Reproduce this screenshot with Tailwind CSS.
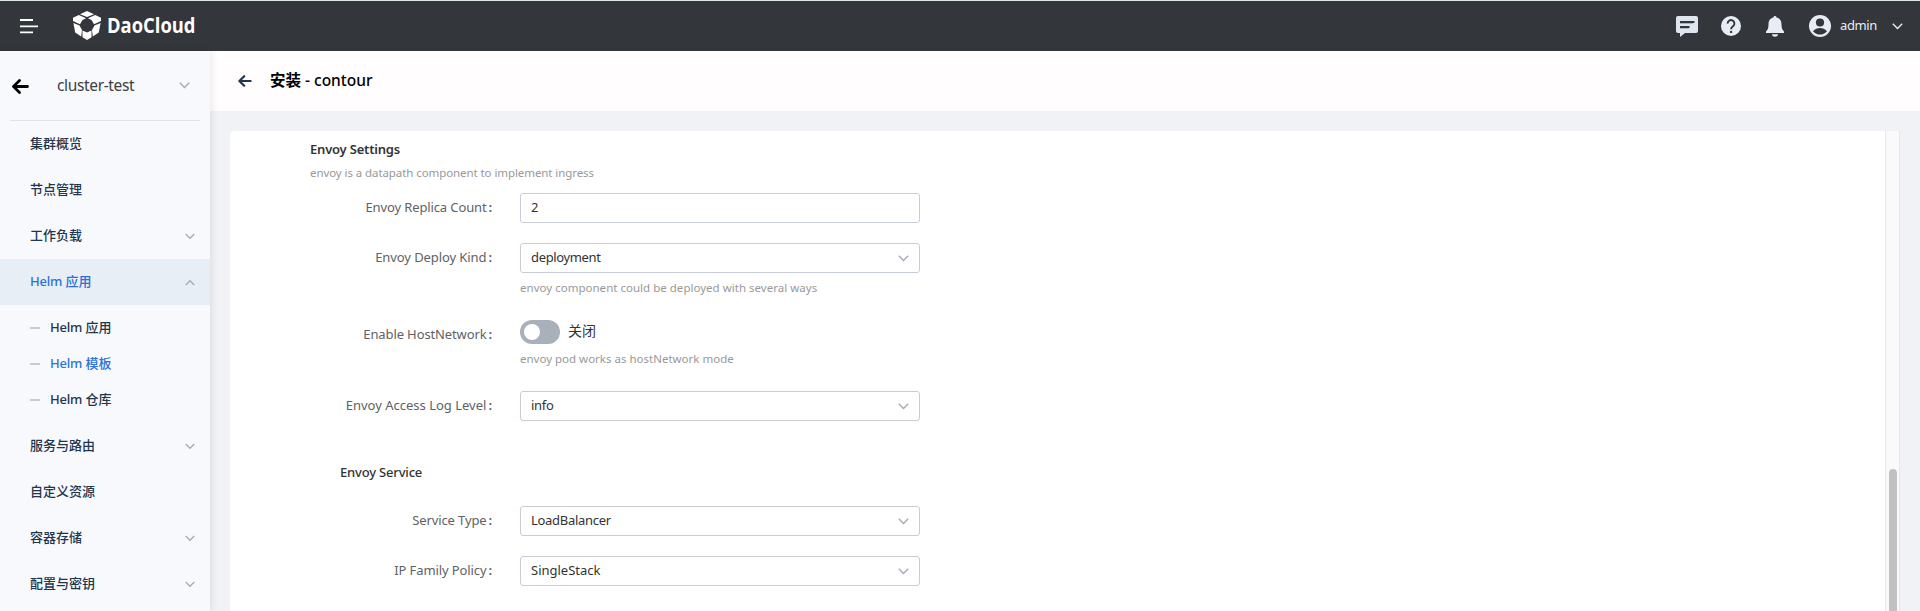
<!DOCTYPE html>
<html lang="zh-CN">
<head>
<meta charset="utf-8">
<title>安装 - contour</title>
<script src="https://cdn.jsdelivr.net/npm/@tailwindcss/browser@4"></script>
</head>
<body class="flex h-[611px] w-[1920px] flex-col overflow-hidden bg-[#f0f2f6] font-['Noto_Sans','Noto_Sans_CJK_SC',sans-serif] text-[13px] text-[#333]">
<svg class="hidden">
  <symbol id="down" viewBox="0 0 11 7"><path d="M.8.8 5.500 5.500 10.200.8" fill="none" stroke="currentColor" stroke-width="1.400"/></symbol>
  <symbol id="back" viewBox="0 0 17 15"><path d="M15.500 7.500H2M7.500 1.500l-6 6 6 6" fill="none" stroke="currentColor" stroke-width="2.800" stroke-linecap="round" stroke-linejoin="round"/></symbol>
</svg>
<header class="flex h-[51px] shrink-0 items-center border-t border-[#dfe9e3] bg-[#33363b] text-[#e8ecf4]">
  <svg class="ml-5 h-4 w-[18px]" viewBox="0 0 18 16"><path d="M0 2h13M0 8.300h18M0 14.300h13" stroke="#fff" stroke-width="1.800"/></svg>
  <svg class="mb-[1px] ml-[35px] h-[29px] w-[28px]" viewBox="0 0 28 29" fill="#fff">
    <path d="M14 0 21 3.200 14 6 7 3.200ZM5.800 4 13 7.200 9.500 9 7 13.200 0 10 0 6.700ZM22.200 4 28 6.700V10L21 13.200 18.500 9 15 7.200ZM.4 12 6.500 14.500 9 19 8.200 25.500 2.200 21.500ZM27.600 12 21.500 14.500 19 19 19.800 25.500 25.800 21.500ZM9.500 19.500 14 21.500 18.500 19.500V26.300L14 29 9.500 26.300Z"/>
  </svg>
  <span class="mb-[5px] ml-[6px] w-[88px] origin-left scale-x-[.835] font-['Open_Sans','Noto_Sans',sans-serif] text-[22px] leading-none font-bold whitespace-nowrap text-white">DaoCloud</span>
  <div class="ml-auto flex items-center">
    <svg class="h-[21px] w-[22px]" viewBox="0 0 22 21"><path d="M2 0h18a2 2 0 0 1 2 2v13a2 2 0 0 1-2 2H9l-5 4v-4H2a2 2 0 0 1-2-2V2a2 2 0 0 1 2-2Z" fill="#dfe6f0"/><path d="M4 7.500h13M4 12.300h9" stroke="#a9afb8" stroke-width="1"/><path d="M4 6h14.500M4 11h9.500" stroke="#33363b" stroke-width="2"/></svg>
    <svg class="ml-[23px] size-5" viewBox="0 0 20 20"><circle cx="10" cy="10" r="10" fill="#e8ecf4"/><path d="M6.600 7.600a3.400 3.400 0 1 1 5.600 2.500C11 11 10.100 11.500 10.100 13.200" fill="none" stroke="#33363b" stroke-width="1.900"/><circle cx="10.100" cy="15.900" r="1.200" fill="#33363b"/></svg>
    <svg class="ml-[24px] h-[21px] w-5" viewBox="0 0 20 21" fill="#e8ecf4"><path d="M10 0a1.500 1.500 0 0 1 1.500 1.600C15 2.300 16.500 5 16.500 8.500c0 4 1 5.500 2.500 7V17H1v-1.500c1.500-1.500 2.500-3 2.500-7C3.500 5 5 2.300 8.500 1.600A1.500 1.500 0 0 1 10 0ZM7 18.300h6a3 2.400 0 0 1-6 0Z"/></svg>
    <svg class="ml-[24px] size-[22px]" viewBox="0 0 22 22"><circle cx="11" cy="11" r="11" fill="#e8ecf4"/><circle cx="11" cy="7.500" r="4.100" fill="#33363b"/><path d="M4 16.200c2-2.400 4.400-3.300 7-3.300s5 .9 7 3.300c-4 4.500-10 4.500-14 0Z" fill="#33363b"/></svg>
    <span class="ml-[9px] w-[36px] text-[13px] tracking-[-0.4px]">admin</span>
    <svg class="mr-[17px] ml-[16px] h-[7px] w-[11px]"><use href="#down"/></svg>
  </div>
</header>
<div class="flex min-h-0 flex-1">
  <aside class="z-10 flex w-[210px] shrink-0 flex-col bg-[#f7f9fd] font-medium text-[#1f364d] shadow-[1px_0_8px_rgba(0,0,0,0.10)]">
    <div class="mx-[10px] flex h-[70px] shrink-0 items-center border-b border-[#dfe2ea] text-[#3c4046]">
      <svg class="mt-[2px] ml-[2px] h-[15px] w-[17px] text-black"><use href="#back"/></svg>
      <span class="ml-[28px] text-[15.500px] font-normal tracking-[-0.350px]">cluster-test</span>
      <svg class="mr-[10px] ml-auto h-[7px] w-[11px] text-[#a3abb8]"><use href="#down"/></svg>
    </div>
    <div class="flex h-[46px] shrink-0 items-center px-[30px]">集群概览</div>
    <div class="flex h-[46px] shrink-0 items-center px-[30px]">节点管理</div>
    <div class="flex h-[46px] shrink-0 items-center justify-between pr-[15px] pl-[30px]">工作负载<svg class="h-[7px] w-[10px] text-[#a3abb8]"><use href="#down"/></svg></div>
    <div class="flex h-[46px] shrink-0 items-center justify-between bg-[#e8eef5] pr-[15px] pl-[30px] text-[#2a72d8]"><span><span class="tracking-[-0.2px]">Helm</span> 应用</span><svg class="h-[7px] w-[10px] rotate-180 text-[#a3abb8]"><use href="#down"/></svg></div>
    <div class="flex shrink-0 flex-col py-[5px] pl-[30px]">
      <div class="flex h-9 items-center gap-[10px]"><i class="h-[2px] w-[10px] bg-[#c5ccd6]"></i><span><span class="tracking-[-0.2px]">Helm</span> 应用</span></div>
      <div class="flex h-9 items-center gap-[10px] text-[#2a72d8]"><i class="h-[2px] w-[10px] bg-[#c5ccd6]"></i><span><span class="tracking-[-0.2px]">Helm</span> 模板</span></div>
      <div class="flex h-9 items-center gap-[10px]"><i class="h-[2px] w-[10px] bg-[#c5ccd6]"></i><span><span class="tracking-[-0.2px]">Helm</span> 仓库</span></div>
    </div>
    <div class="flex h-[46px] shrink-0 items-center justify-between pr-[15px] pl-[30px]">服务与路由<svg class="h-[7px] w-[10px] text-[#a3abb8]"><use href="#down"/></svg></div>
    <div class="flex h-[46px] shrink-0 items-center px-[30px]">自定义资源</div>
    <div class="flex h-[46px] shrink-0 items-center justify-between pr-[15px] pl-[30px]">容器存储<svg class="h-[7px] w-[10px] text-[#a3abb8]"><use href="#down"/></svg></div>
    <div class="flex h-[46px] shrink-0 items-center justify-between pr-[15px] pl-[30px]">配置与密钥<svg class="h-[7px] w-[10px] text-[#a3abb8]"><use href="#down"/></svg></div>
  </aside>
  <main class="flex min-w-0 flex-1 flex-col">
    <div class="flex h-[60px] shrink-0 items-center bg-[#fffdfe] pl-7 text-[15.500px] font-semibold text-black">
      <svg class="h-[12px] w-[14px] text-[#1f364d]"><use href="#back"/></svg>
      <span class="ml-[18px]">安装 <span class="font-medium">- contour</span></span>
    </div>
    <div class="mt-5 mr-5 ml-5 flex min-h-0 flex-1">
      <form class="flex min-w-0 flex-1 flex-col overflow-hidden rounded-tl bg-white">
        <h2 class="mt-2 ml-20 h-5 text-[13px] leading-5 font-semibold tracking-[-0.200px]">Envoy Settings</h2>
        <p class="mt-[5px] ml-20 h-[18px] text-[11.500px] leading-[18px] tracking-[-0.080px] text-[#999]">envoy is a datapath component to implement ingress</p>
        <div class="mt-[11px] flex h-[30px] items-center">
          <label class="w-[262px] text-right tracking-[-0.120px] text-[#606266]">Envoy Replica Count<span class="pl-[2px] font-semibold">:</span></label>
          <div class="ml-7 flex h-[30px] w-[400px] items-center rounded-[3px] border border-[#c8ccd9] px-[10px]">2</div>
        </div>
        <div class="mt-5 flex h-[30px] items-center">
          <label class="w-[262px] text-right tracking-[-0.080px] text-[#606266]">Envoy Deploy Kind<span class="pl-[2px] font-semibold">:</span></label>
          <div class="ml-7 flex h-[30px] w-[400px] items-center justify-between rounded-[3px] border border-[#c8ccd9] px-[10px] tracking-[-0.350px]">deployment<svg class="h-[7px] w-[11px] text-[#a3abb8]"><use href="#down"/></svg></div>
        </div>
        <p class="mt-[6px] ml-[290px] h-[18px] text-[11.500px] leading-[18px] tracking-[0.020px] text-[#999]">envoy component could be deployed with several ways</p>
        <div class="mt-[23px] flex h-6 items-center">
          <label class="w-[262px] pt-[5px] text-right tracking-[-0.120px] text-[#606266]">Enable HostNetwork<span class="pl-[2px] font-semibold">:</span></label>
          <div class="ml-7 flex h-6 w-10 items-center rounded-full bg-[#a8b0b9] pl-1"><i class="size-4 rounded-full bg-white"></i></div>
          <span class="mb-[3px] ml-2 text-[14px]">关闭</span>
        </div>
        <p class="mt-[6px] ml-[290px] h-[18px] text-[11.500px] leading-[18px] text-[#999]">envoy pod works as hostNetwork mode</p>
        <div class="mt-[23px] flex h-[30px] items-center">
          <label class="w-[262px] text-right text-[#606266]">Envoy Access Log Level<span class="pl-[2px] font-semibold">:</span></label>
          <div class="ml-7 flex h-[30px] w-[400px] items-center justify-between rounded-[3px] border border-[#c8ccd9] px-[10px] tracking-[-0.300px]">info<svg class="h-[7px] w-[11px] text-[#a3abb8]"><use href="#down"/></svg></div>
        </div>
        <h3 class="mt-[41px] ml-[110px] h-5 leading-5 font-medium tracking-[-0.180px]">Envoy Service</h3>
        <div class="mt-6 flex h-[30px] items-center">
          <label class="w-[262px] text-right tracking-[-0.120px] text-[#606266]">Service Type<span class="pl-[2px] font-semibold">:</span></label>
          <div class="ml-7 flex h-[30px] w-[400px] items-center justify-between rounded-[3px] border border-[#c8ccd9] px-[10px] tracking-[-0.300px]">LoadBalancer<svg class="h-[7px] w-[11px] text-[#a3abb8]"><use href="#down"/></svg></div>
        </div>
        <div class="mt-5 flex h-[30px] items-center">
          <label class="w-[262px] text-right tracking-[-0.100px] text-[#606266]">IP Family Policy<span class="pl-[2px] font-semibold">:</span></label>
          <div class="ml-7 flex h-[30px] w-[400px] items-center justify-between rounded-[3px] border border-[#c8ccd9] px-[10px]">SingleStack<svg class="h-[7px] w-[11px] text-[#a3abb8]"><use href="#down"/></svg></div>
        </div>
      </form>
      <div class="w-[15px] border-x border-[#e7e7e7] bg-[#fafafa] pt-[338px] pl-[3px]"><div class="h-[142px] w-2 rounded-t-full bg-[#c1c1c1]"></div></div>
    </div>
  </main>
</div>
</body>
</html>
